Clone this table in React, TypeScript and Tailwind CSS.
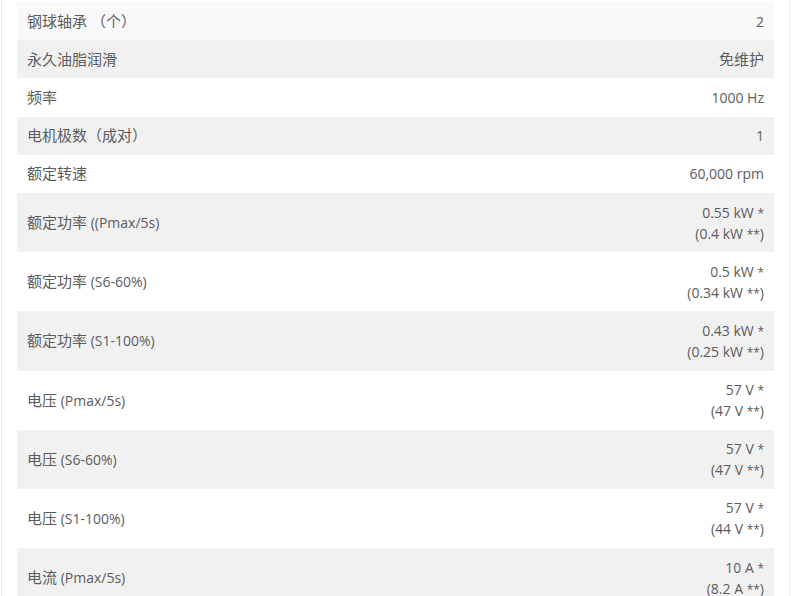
const ROWS: { label: [string, string]; value: string[] }[] = [
  { label: ['钢球轴承 （个）', ''], value: ['2'] },
  { label: ['永久油脂润滑', ''], value: ['免维护'] },
  { label: ['频率', ''], value: ['1000 Hz'] },
  { label: ['电机极数（成对）', ''], value: ['1'] },
  { label: ['额定转速', ''], value: ['60,000 rpm'] },
  { label: ['额定功率', ' ((Pmax/5s)'], value: ['0.55 kW *', '(0.4 kW **)'] },
  { label: ['额定功率', ' (S6-60%)'], value: ['0.5 kW *', '(0.34 kW **)'] },
  { label: ['额定功率', ' (S1-100%)'], value: ['0.43 kW *', '(0.25 kW **)'] },
  { label: ['电压', ' (Pmax/5s)'], value: ['57 V *', '(47 V **)'] },
  { label: ['电压', ' (S6-60%)'], value: ['57 V *', '(47 V **)'] },
  { label: ['电压', ' (S1-100%)'], value: ['57 V *', '(44 V **)'] },
  { label: ['电流', ' (Pmax/5s)'], value: ['10 A *', '(8.2 A **)'] },
]

const hasZh = (s: string) => /[\u4e00-\u9fff]/.test(s)

// asterisks sit small in the original
function Value({ v }: { v: string }) {
  if (hasZh(v)) return <span className="text-[15px] leading-none">{v}</span>
  const m = v.match(/^(.*?)(\*+)(\)?)$/)
  if (!m) return <>{v}</>
  return (
    <>
      {m[1]}
      <span className="text-[12px] leading-none">{m[2]}</span>
      {m[3]}
    </>
  )
}

export default function App() {
  return (
    <div
      className="min-h-screen bg-white"
      style={{ fontFamily: '"Open Sans", "Noto Sans CJK SC", sans-serif' }}
    >
      <div className="ml-px w-[789px] border-x border-[#ededed] px-[15px] pt-[2px]">
        <table className="w-full border-collapse text-[14px] text-[#5c5c5c]">
          <tbody>
            {ROWS.map((r, i) => {
              const bg = i === 0 ? 'bg-[#f9f9f9]' : i % 2 === 1 ? 'bg-[#f1f1f1]' : 'bg-white'
              return (
                <tr key={i} className={bg}>
                  <td className="h-[38.2px] py-[8.6px] pl-[10px] align-middle leading-[21px]">
                    <span className="text-[15px] leading-none">{r.label[0]}</span>
                    {r.label[1]}
                  </td>
                  <td className="py-[8.6px] pr-[10px] text-right align-middle leading-[21px]">
                    {r.value.map((v, j) => (
                      <div key={j}>
                        <Value v={v} />
                      </div>
                    ))}
                  </td>
                </tr>
              )
            })}
          </tbody>
        </table>
      </div>
    </div>
  )
}
